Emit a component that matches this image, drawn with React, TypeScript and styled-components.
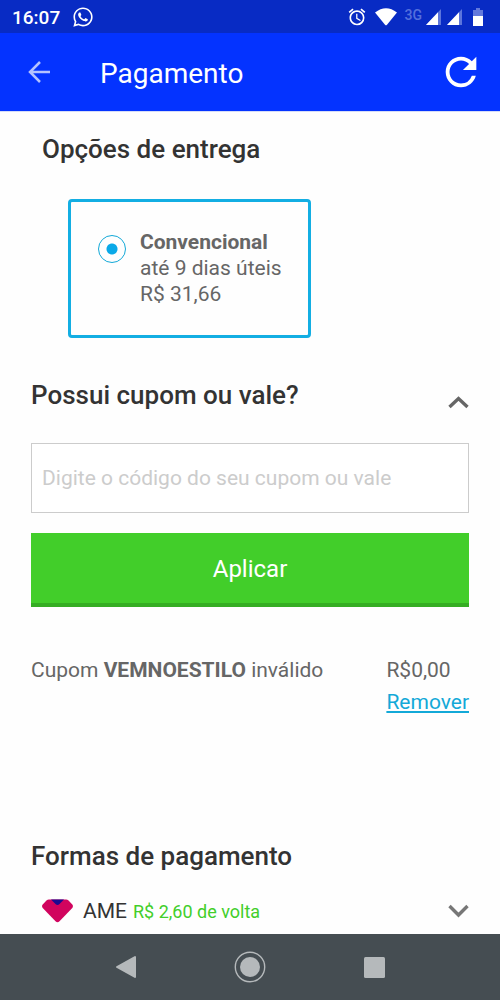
import React, { useState } from 'react';
import styled, { createGlobalStyle } from 'styled-components';
import { FaWhatsapp } from 'react-icons/fa';
import { MdAlarm, MdRefresh } from 'react-icons/md';

const GlobalStyle = createGlobalStyle`
  *, *::before, *::after { box-sizing: border-box; }
  body {
    margin: 0;
    background: #fefefe;
    color: #666;
    font-family: Roboto, "Liberation Sans", sans-serif;
    font-size: 21px;
  }
  button, input { font-family: inherit; }
  button { padding: 0; border: 0; background: none; color: inherit; cursor: pointer; }
  svg { display: block; flex: none; }
`;

const Screen = styled.div`
  display: flex;
  flex-direction: column;
  min-height: 100vh;
`;

const StatusBar = styled.div`
  display: flex;
  align-items: center;
  justify-content: space-between;
  height: 33px;
  padding: 0 15px 0 12px;
  background: #082bc4;
  color: #fff;
`;

const StatusGroup = styled.div<{ $gap: number }>`
  display: flex;
  align-items: center;
  gap: ${({ $gap }) => $gap}px;
`;

const Clock = styled.time`
  padding-top: 2px;
  font-size: 19px;
  font-weight: 500;
  line-height: 32px;
`;

const NetworkType = styled.span`
  align-self: flex-start;
  color: #5570dc;
  font-size: 14px;
  font-weight: 500;
  line-height: 14px;
`;

const Header = styled.header`
  display: flex;
  align-items: center;
  height: 79px;
  padding: 0 16px 0 28px;
  border-bottom: 1px solid #d5dcf8;
  background: #0433ff;
  color: #fff;
`;

const Title = styled.h1`
  flex: 1;
  margin: 0 0 0 50px;
  padding-top: 4px;
  font-size: 28px;
  font-weight: 400;
  line-height: 36px;
`;

const Main = styled.main`
  flex: 1;
  padding: 22px 31px 0;
`;

const Section = styled.section<{ $top?: number }>`
  margin-top: ${({ $top = 0 }) => $top}px;
`;

const Heading = styled.h2<{ $indent?: boolean }>`
  margin: 0;
  padding-left: ${({ $indent }) => ($indent ? 11 : 0)}px;
  color: #333;
  font-size: 26px;
  font-weight: 500;
  line-height: 30px;
`;

const DeliveryOption = styled.label`
  display: flex;
  align-items: flex-start;
  gap: 14px;
  width: fit-content;
  margin: 35px 0 0 37px;
  padding: 27px 26px 28px 27px;
  border: 3px solid #13aee3;
  border-radius: 4px;
`;

const Radio = styled.input`
  appearance: none;
  flex: none;
  width: 28px;
  height: 28px;
  margin: 6px 0 0;
  border: 1px solid #13a9d8;
  border-radius: 50%;

  &:checked {
    background: radial-gradient(circle, #0aa9e8 5px, transparent 6px);
  }
`;

const OptionText = styled.span`
  display: flex;
  flex-direction: column;
  line-height: 26px;
`;

const Collapse = styled.button`
  display: flex;
  align-items: flex-end;
  justify-content: space-between;
  width: 100%;
  text-align: left;
`;

const CouponInput = styled.input`
  display: block;
  width: 100%;
  height: 70px;
  margin-top: 33px;
  padding: 0 10px;
  border: 1px solid #ccc;
  border-radius: 0;
  background: #fff;
  color: #333;
  font-size: 21px;

  &::placeholder { color: #ccc; opacity: 1; }
`;

const ApplyButton = styled.button`
  display: block;
  width: 100%;
  height: 74px;
  margin-top: 20px;
  padding-top: 2px;
  border-bottom: 4px solid #35ad23;
  background: #42ce2a;
  color: #fff;
  font-size: 24px;
`;

const CouponResult = styled.div`
  display: flex;
  justify-content: space-between;
  margin-top: 47px;
  line-height: 32px;
`;

const CouponValue = styled.div`
  display: flex;
  flex-direction: column;
`;

const RemoveLink = styled.a`
  color: #13a9d8;
  text-decoration: underline;
`;

const PaymentMethod = styled.button`
  display: flex;
  align-items: center;
  width: 100%;
  height: 32px;
  margin: 24px 0 6px;
  padding-left: 11px;
`;

const MethodName = styled.span`
  margin-left: 10px;
  color: #333;
  font-size: 21px;
`;

const Cashback = styled.span`
  flex: 1;
  margin-left: 6px;
  color: #42ce2a;
  font-size: 18px;
  text-align: left;
`;

const NavBar = styled.nav`
  display: grid;
  grid-template-columns: repeat(3, 1fr);
  height: 66px;
  padding: 0 64px;
  background: #454d52;
`;

const NavButton = styled.button`
  display: flex;
  align-items: center;
  justify-content: center;
`;

const Chevron = ({ up, color }: { up?: boolean; color: string }) => (
  <svg width="21" height="14" viewBox="0 0 21 14" aria-hidden="true">
    <path
      d={up ? 'M1.5 11L10.5 2.5L19.5 11' : 'M1.5 2L10.5 11L19.5 2'}
      fill="none"
      stroke={color}
      strokeWidth="3.4"
    />
  </svg>
);

const Signal = () => (
  <svg width="16" height="17" viewBox="0 0 16 17" aria-hidden="true">
    <path d="M0 17L15 1V17Z" fill="#5c75dc" />
    <path d="M0 17L12 4.2V17Z" fill="#fff" />
  </svg>
);

const App = () => {
  const [code, setCode] = useState('');
  const [open, setOpen] = useState(true);

  return (
    <Screen>
      <GlobalStyle />
      <StatusBar>
        <StatusGroup $gap={12}>
          <Clock>16:07</Clock>
          <FaWhatsapp size={22} />
        </StatusGroup>
        <StatusGroup $gap={8}>
          <MdAlarm size={20} />
          <svg width="22" height="18" viewBox="0 0 22 18" aria-hidden="true">
            <path d="M0 4.5Q11-4 22 4.5L12 16.8Q11 17.8 10 16.8Z" fill="#fff" />
          </svg>
          <StatusGroup $gap={4}>
            <NetworkType>3G</NetworkType>
            <StatusGroup $gap={5}>
              <Signal />
              <Signal />
            </StatusGroup>
          </StatusGroup>
          <svg width="14" height="18" viewBox="0 0 14 18" aria-hidden="true">
            <path d="M5 0H9V2H12V8H2V2H5Z" fill="#6379dc" />
            <path d="M2 8H12V18H2Z" fill="#fff" />
          </svg>
        </StatusGroup>
      </StatusBar>

      <Header>
        <button type="button" aria-label="Voltar">
          <svg width="22" height="24" viewBox="0 0 22 24" aria-hidden="true">
            <path
              d="M12 2L2 12L12 22M2 12H22"
              fill="none"
              stroke="#b4c2ff"
              strokeWidth="2.5"
            />
          </svg>
        </button>
        <Title>Pagamento</Title>
        <button type="button" aria-label="Atualizar">
          <MdRefresh size={46} />
        </button>
      </Header>

      <Main>
        <Section>
          <Heading $indent>Opções de entrega</Heading>
          <DeliveryOption>
            <Radio type="radio" name="entrega" defaultChecked />
            <OptionText>
              <b>Convencional</b>
              <span>até 9 dias úteis</span>
              <span>R$ 31,66</span>
            </OptionText>
          </DeliveryOption>
        </Section>

        <Section $top={42}>
          <Collapse type="button" aria-expanded={open} onClick={() => setOpen(!open)}>
            <Heading as="span">Possui cupom ou vale?</Heading>
            <Chevron up={open} color="#666" />
          </Collapse>
          {open && (
            <>
              <CouponInput
                aria-label="Código do cupom ou vale"
                placeholder="Digite o código do seu cupom ou vale"
                value={code}
                onChange={(e) => setCode(e.target.value)}
              />
              <ApplyButton type="button">Aplicar</ApplyButton>
              <CouponResult>
                <span>
                  Cupom <b>VEMNOESTILO</b> inválido
                </span>
                <CouponValue>
                  <span>R$0,00</span>
                  <RemoveLink href="#remover">Remover</RemoveLink>
                </CouponValue>
              </CouponResult>
            </>
          )}
        </Section>

        <Section $top={123}>
          <Heading>Formas de pagamento</Heading>
          <PaymentMethod type="button" aria-expanded={false}>
            <svg width="31" height="24" viewBox="0 0 31 24" aria-hidden="true">
              <path
                d="M7 0.5H24Q25.5 0.5 26.5 1.5L30.3 5.6Q31.6 7.2 30.3 9L17.5 22.3Q15.5 24.2 13.5 22.3L0.7 9Q-0.6 7.2 0.7 5.6L4.5 1.5Q5.5 0.5 7 0.5Z"
                fill="#d1045e"
              />
              <path d="M9 0.5H22L17.5 5Q15.5 6.8 13.5 5Z" fill="#1c0a91" />
            </svg>
            <MethodName>AME</MethodName>
            <Cashback>R$ 2,60 de volta</Cashback>
            <Chevron color="#777" />
          </PaymentMethod>
        </Section>
      </Main>

      <NavBar>
        <NavButton type="button" aria-label="Voltar">
          <svg width="22" height="24" viewBox="0 0 22 24" aria-hidden="true">
            <path
              d="M20 2V22L2 12Z"
              fill="#b5b9bb"
              stroke="#b5b9bb"
              strokeWidth="2"
              strokeLinejoin="round"
            />
          </svg>
        </NavButton>
        <NavButton type="button" aria-label="Início">
          <svg width="32" height="32" viewBox="0 0 32 32" aria-hidden="true">
            <circle cx="16" cy="16" r="14.7" fill="none" stroke="#b5b9bb" strokeWidth="1.4" />
            <circle cx="16" cy="16" r="10" fill="#b5b9bb" />
          </svg>
        </NavButton>
        <NavButton type="button" aria-label="Recentes">
          <svg width="21" height="21" viewBox="0 0 21 21" aria-hidden="true">
            <rect width="21" height="21" rx="1.5" fill="#b5b9bb" />
          </svg>
        </NavButton>
      </NavBar>
    </Screen>
  );
};

export default App;
